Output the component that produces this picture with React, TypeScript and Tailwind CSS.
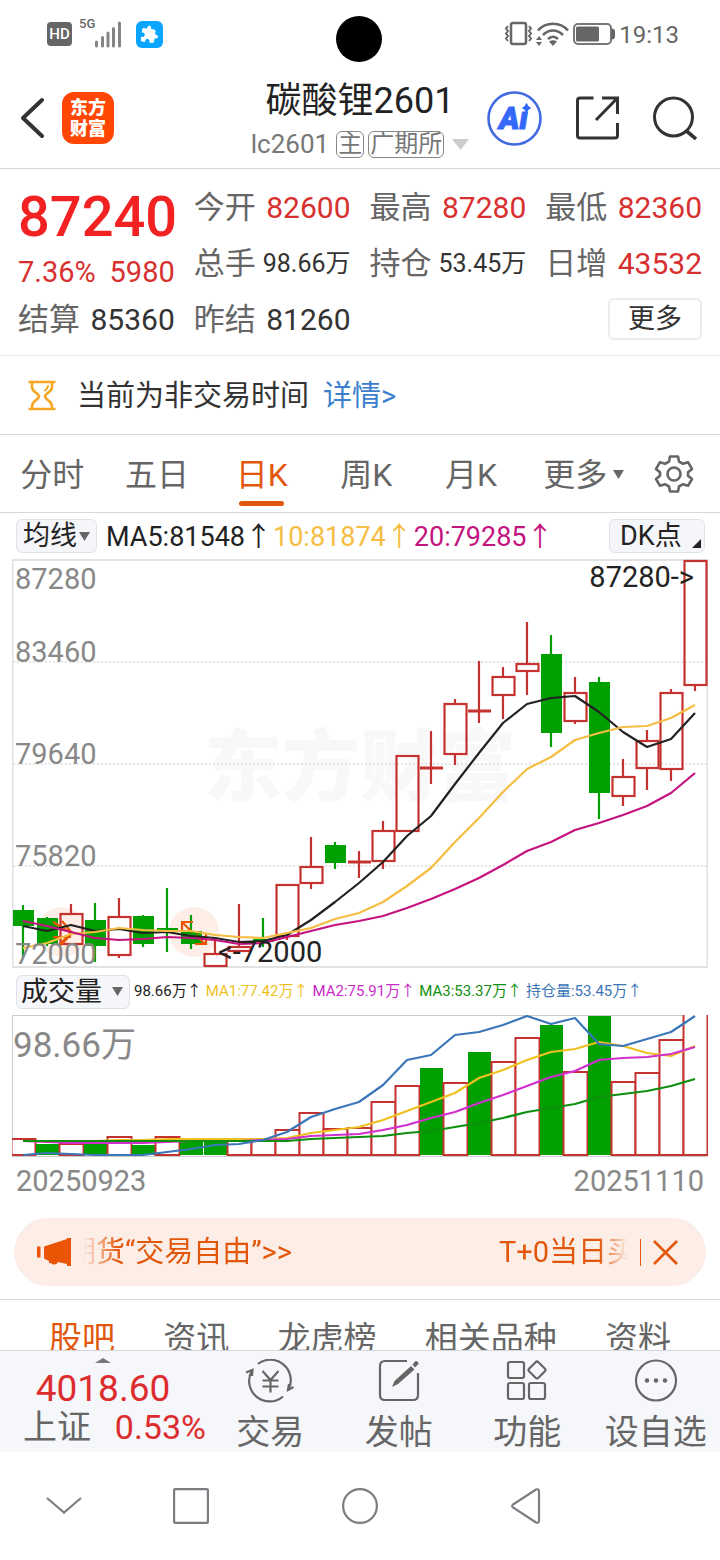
import React from "react";

type Candle = { up: boolean; high: number; top: number; bottom: number; low: number };

const FIRST_X = 23;
const STEP = 24;
const RED = "#c53330";
const GREEN = "#00a000";

const c = (up: boolean, high: number, top: number, bottom: number, low: number): Candle => ({ up, high, top, bottom, low });

const candles: Candle[] = [
  c(false, 905, 910, 926, 957),
  c(false, 917, 918, 944, 946),
  c(true, 904, 914, 944, 944),
  c(false, 903, 920, 946, 962),
  c(true, 898, 917, 955, 958),
  c(false, 915, 916, 944, 947),
  c(false, 888, 928, 930, 952),
  c(false, 915, 931, 944, 949),
  c(true, 938, 954, 966, 967),
  c(true, 904, 947, 951, 952),
  c(false, 918, 939, 942, 947),
  c(true, 884, 885, 936, 940),
  c(true, 837, 867, 883, 889),
  c(false, 842, 845, 863, 869),
  c(true, 851, 862, 862, 878),
  c(true, 821, 831, 861, 869),
  c(true, 755, 756, 831, 831),
  c(true, 731, 768, 768, 784),
  c(true, 699, 704, 754, 765),
  c(true, 661, 711, 711, 723),
  c(true, 667, 677, 695, 719),
  c(true, 622, 664, 671, 695),
  c(false, 635, 654, 733, 747),
  c(true, 677, 693, 721, 724),
  c(false, 677, 682, 793, 819),
  c(true, 759, 777, 796, 806),
  c(true, 730, 741, 768, 790),
  c(true, 689, 693, 769, 781),
  c(true, 560, 561, 685, 691),
];

const ma5 = [926, 931, 925, 931, 929, 933, 932, 936, 938, 942, 941, 935, 920, 902, 883, 862, 836, 816, 784, 753, 723, 704, 698, 696, 712, 732, 747, 739, 713];
const ma10 = [948, 943, 934, 932, 928, 930, 931, 931, 935, 937, 938, 933, 928, 919, 913, 902, 886, 868, 842, 818, 792, 769, 757, 740, 733, 727, 726, 718, 705];
const ma20 = [921, 926, 932, 938, 940, 939, 937, 938, 940, 944, 943, 937, 931, 925, 921, 916, 908, 899, 889, 878, 865, 851, 842, 830, 823, 815, 806, 793, 773];

const bars: [boolean, number][] = [
  [true, 1139], [false, 1144], [true, 1144], [false, 1143], [true, 1137], [false, 1145], [true, 1137], [false, 1141],
  [false, 1141], [true, 1139], [true, 1141], [true, 1130], [true, 1113], [true, 1129], [true, 1128], [true, 1102],
  [true, 1086], [false, 1068], [true, 1083], [false, 1052], [true, 1062], [true, 1038], [false, 1025], [true, 1072],
  [false, 1016], [true, 1082], [true, 1073], [true, 1040], [true, 1008],
];
const vol1 = [1141, 1141, 1141, 1141, 1140, 1140, 1139, 1139, 1139, 1139, 1139, 1138, 1133, 1130, 1127, 1120, 1111, 1102, 1093, 1078, 1070, 1060, 1052, 1049, 1042, 1046, 1053, 1056, 1046];
const vol2 = [1141, 1142, 1143, 1143, 1143, 1143, 1142, 1141, 1141, 1141, 1140, 1139, 1136, 1135, 1134, 1130, 1125, 1118, 1112, 1103, 1095, 1086, 1077, 1071, 1060, 1058, 1057, 1054, 1047];
const vol3 = [1141, 1141, 1141, 1141, 1141, 1141, 1141, 1141, 1141, 1141, 1141, 1141, 1139, 1138, 1137, 1136, 1133, 1131, 1127, 1123, 1118, 1112, 1108, 1104, 1097, 1094, 1091, 1086, 1079];
const interest = [1155, 1153, 1154, 1155, 1155, 1155, 1152, 1149, 1145, 1144, 1140, 1132, 1117, 1109, 1102, 1085, 1060, 1055, 1035, 1032, 1025, 1016, 1024, 1018, 1044, 1046, 1039, 1032, 1016];

const points = (ys: number[]) => ys.map((y, i) => `${FIRST_X + i * STEP},${y}`).join(" ");

function Line({ ys, color }: { ys: number[]; color: string }) {
  return <polyline points={points(ys)} fill="none" stroke={color} strokeWidth="2.200" strokeLinejoin="round" />;
}

function StatusBar() {
  return (
    <div className="relative flex h-[68px] items-center justify-between pl-[47px] pr-[41px] text-[#666]">
      <div className="flex items-center">
        <span className="flex h-6 w-[25px] items-center justify-center rounded bg-[#666] text-[15px] font-medium text-white">HD</span>
        <span className="mb-5 ml-[7px] text-[13px] leading-4 font-medium">5G</span>
        <svg className="h-7 w-[26px]" viewBox="0 0 26 28" aria-hidden="true">
          <g stroke="#858585" strokeWidth="3" strokeLinecap="round">
            <path d="M1.5 22v4M7.500 17.500v8.500M13 13v13M18.500 8.500v17.500M24.500 3v23" />
          </g>
        </svg>
        <span className="ml-[15px] flex size-[27px] items-center justify-center rounded-md bg-[#0aa5ff]">
          <svg className="size-[19px]" viewBox="0 0 24 24" fill="#fff" aria-hidden="true">
            <g transform="rotate(8 12 12)">
              <path d="M20.500 11H19V7c0-1.100-.9-2-2-2h-4V3.500a2.500 2.500 0 0 0-5 0V5H4c-1.100 0-2 .9-2 2v3.800h1.500a2.700 2.700 0 0 1 0 5.400H2V20c0 1.100.9 2 2 2h3.800v-1.500a2.700 2.700 0 0 1 5.400 0V22H17c1.100 0 2-.9 2-2v-4h1.500a2.500 2.500 0 0 0 0-5z" />
            </g>
          </svg>
        </span>
      </div>
      <div className="absolute top-4 left-1/2 -ml-6 size-[46px] rounded-full bg-black" />
      <div className="flex items-center">
        <svg className="h-[26px] w-[29px]" viewBox="0 0 29 26" fill="none" stroke="#666" strokeWidth="2" aria-hidden="true">
          <rect x="7" y="2" width="15" height="21" rx="2" strokeWidth="2.500" />
          <path d="M4 5l-2 2.500 2 2.500-2 2.500 2 2.500-2 2.500 2 2.500M25 5l2 2.500-2 2.500 2 2.500-2 2.500 2 2.500-2 2.500" />
        </svg>
        <svg className="ml-[2px] h-6 w-[34px]" viewBox="0 0 34 24" fill="none" stroke="#666" strokeWidth="2.600" aria-hidden="true">
          <path d="M3 8.500C11-.5 25-.5 33 8.500M8 13c6-6 14-6 20 0M13 17c3-3 7-3 10 0" />
          <path d="M14 19.500q4-2.500 8 0L18 24z" fill="#666" stroke="none" />
          <path d="M1 18l3-4 3 4zM1 20l3 4 3-4z" fill="#666" stroke="none" />
        </svg>
        <svg className="ml-1 h-[22px] w-[42px]" viewBox="0 0 42 22" fill="none" aria-hidden="true">
          <rect x="1" y="1" width="37" height="20" rx="4" stroke="#777" strokeWidth="2" />
          <rect x="3" y="3.500" width="23" height="15" rx="1.500" fill="#666" />
          <path d="M38.500 5.500q3.500 0 3.500 3v5q0 3-3.500 3z" fill="#666" />
        </svg>
        <span className="ml-[4px] pt-[2px] text-[24px] leading-7">19:13</span>
      </div>
    </div>
  );
}

function Header() {
  return (
    <header className="grid h-[101px] grid-cols-[1fr_auto_1fr] items-center border-b border-[#d8d8d8] pr-[23px] pl-[19px]">
      <div className="flex items-center gap-[17px]">
        <button type="button" aria-label="返回">
          <svg className="h-11 w-[26px]" viewBox="0 0 26 44" fill="none" stroke="#333" strokeWidth="4" strokeLinecap="round" strokeLinejoin="round">
            <path d="M23 4L4 22l19 18" />
          </svg>
        </button>
        <span className="flex size-[52px] flex-col items-center justify-center rounded-xl bg-[#ff4602] text-[18px] leading-[21px] font-black text-white">
          <span>东方</span>
          <span>财富</span>
        </span>
      </div>
      <div className="flex flex-col items-center pt-1 pl-1">
        <h1 className="text-[36px] leading-[48px] text-[#222]">碳酸锂2601</h1>
        <button type="button" className="flex items-center text-[26px] leading-[38px] text-[#777]">
          <span className="mr-[7px]">lc2601</span>
          <span className="mr-1 rounded-md border border-[#888] px-px text-[24px] leading-[25px]">主</span>
          <span className="rounded-md border border-[#888] px-px text-[24px] leading-[25px]">广期所</span>
          <svg className="ml-2 h-[11px] w-[17px]" viewBox="0 0 17 11" aria-hidden="true"><path d="M0 0h17L8.500 11z" fill="#ccc" /></svg>
        </button>
      </div>
      <div className="flex items-center justify-end gap-[34px]">
        <button type="button" aria-label="Ai">
          <svg className="size-[55px]" viewBox="0 0 55 55">
            <circle cx="27.500" cy="27.500" r="26" fill="#fff" stroke="#4169e1" strokeWidth="2.600" />
            <text x="12" y="38" fill="#3468fb" stroke="#3468fb" strokeWidth="1" fontSize="31" fontWeight="900" fontStyle="italic">Ai</text>
            <rect x="33" y="11" width="13" height="9" fill="#fff" />
            <path d="M39.500 12.500q1 3.500 4 4.500-3 1-4 4.500-1-3.500-4-4.500 3-1 4-4.500z" fill="#3468fb" stroke="#3468fb" strokeWidth="1" />
          </svg>
        </button>
        <button type="button" aria-label="分享">
          <svg className="h-[44px] w-[43px]" viewBox="0 0 43 44" fill="none" stroke="#333" strokeWidth="3">
            <path d="M17.500 2H4Q1.500 2 1.500 4.500v35Q1.500 42 4 42h35q2.500 0 2.500-2.500V27M26 2h15.500v16M41 2.500L20 24" />
          </svg>
        </button>
        <button type="button" aria-label="搜索">
          <svg className="size-[44px]" viewBox="0 0 44 44" fill="none" stroke="#333" strokeWidth="3">
            <circle cx="20.500" cy="21" r="19" />
            <path d="M33.500 35l9.500 8" strokeWidth="3.600" />
          </svg>
        </button>
      </div>
    </header>
  );
}

function Stat({ label, value, tone }: { label: string; value: string; tone: "red" | "dark" | "small" }) {
  const cls =
    tone === "red" ? "text-[30px] text-[#d8302f]" : tone === "small" ? "pt-px text-[25px] text-[#333]" : "text-[30px] text-[#333]";
  return (
    <div className="flex h-14 items-center justify-between whitespace-nowrap">
      <dt className="pt-[3px] text-[31px] text-[#666]">{label}</dt>
      <dd className={cls}>{value}</dd>
    </div>
  );
}

function Quote() {
  return (
    <section className="border-b border-[#ebebeb] px-[18px] pt-[10px] pb-2">
      <dl className="grid grid-cols-4 gap-x-[19px]">
        <div className="row-span-2 flex flex-col justify-between pt-[5px] pb-[2px]">
          <dt className="text-[56px] leading-[66px] font-medium text-[#f22222]">87240</dt>
          <dd className="flex justify-between text-[29px] leading-[34px] text-[#d8302f]">
            <span>7.36%</span>
            <span>5980</span>
          </dd>
        </div>
        <Stat label="今开" value="82600" tone="red" />
        <Stat label="最高" value="87280" tone="red" />
        <Stat label="最低" value="82360" tone="red" />
        <Stat label="总手" value="98.66万" tone="small" />
        <Stat label="持仓" value="53.45万" tone="small" />
        <Stat label="日增" value="43532" tone="red" />
        <Stat label="结算" value="85360" tone="dark" />
        <Stat label="昨结" value="81260" tone="dark" />
        <div className="col-span-2 flex items-center justify-end">
          <button type="button" className="h-[42px] w-[94px] rounded-md border-2 border-[#ececec] text-[27px] leading-9 text-[#333]">更多</button>
        </div>
      </dl>
    </section>
  );
}

function Notice() {
  return (
    <section className="flex h-[79px] items-center border-b border-[#d8d8d8] pl-[28px] text-[29px] text-[#333]">
      <svg className="h-[31px] w-7" viewBox="0 0 28 31" fill="none" stroke="#f5a623" strokeWidth="2.600" aria-hidden="true">
        <path d="M.5 2h27M.5 29h27M4 2v5q0 3 3.500 5.500T11 16q0 2-3.500 4.500T4 27v2M24 2v5q0 3-3.500 5.500T17 16q0 2 3.500 4.500T24 27v2" />
        <path d="M20 6q-.5 2.500-3 4.500" strokeWidth="2" strokeLinecap="round" />
      </svg>
      <p className="ml-[21px] pt-[3px]">
        当前为非交易时间
        <a href="#detail" className="ml-[14px] text-[#3b80cd]">详情&gt;</a>
      </p>
    </section>
  );
}

function PeriodTabs() {
  const items = ["分时", "五日", "日K", "周K", "月K"];
  return (
    <nav className="flex h-[78px] border-b border-[#d8d8d8] text-[32px] text-[#666]">
      {items.map((t) => (
        <button
          key={t}
          type="button"
          className={t === "日K" ? "relative flex-1 pt-[2px] text-[#e2570c]" : "flex-1 pt-[2px]"}
        >
          {t}
          {t === "日K" && <span className="absolute bottom-[6px] left-1/2 -ml-[23px] h-[5px] w-[45px] rounded-full bg-[#e2570c]" />}
        </button>
      ))}
      <button type="button" className="flex flex-1 items-center justify-center pt-[2px]">
        <span className="ml-4">更多</span>
        <svg className="ml-[6px] h-[9px] w-[11px]" viewBox="0 0 11 9" aria-hidden="true"><path d="M0 0h11L5.500 9z" fill="#666" /></svg>
      </button>
      <button type="button" aria-label="设置" className="flex w-[92px] items-center justify-center">
        <svg className="size-10" viewBox="0 0 40 40" fill="none" stroke="#666" strokeWidth="2.600" strokeLinejoin="round">
          <path d="M16 2.500h8l1 5 4 2.300 5-1.600 4 6.800-4 3.300v3.400l4 3.300-4 6.800-5-1.600-4 2.300-1 5h-8l-1-5-4-2.300-5 1.600-4-6.800 4-3.300v-3.400l-4-3.300 4-6.800 5 1.600 4-2.300z" />
          <circle cx="20" cy="20" r="6.500" />
        </svg>
      </button>
    </nav>
  );
}

function PriceChart() {
  return (
    <svg className="block h-auto w-full" viewBox="12 559 696 409" role="img" aria-label="日K线图">
      <rect x="12.500" y="560" width="695" height="407" fill="#fff" stroke="#e2e2e2" strokeWidth="2" />
      <text x="204" y="795" fontSize="78" fontWeight="900" fill="#f8f8f8">东方财富</text>
      <circle cx="62" cy="932" r="25" fill="#fdeee7" />
      <circle cx="194" cy="932" r="25" fill="#fdeee7" />
      {[662, 764, 866].map((y) => (
        <path key={y} d={`M13 ${y}H707`} stroke="#dcdcdc" strokeWidth="1.500" strokeDasharray="2 2" />
      ))}
      {candles.map((k, i) => {
        const x = FIRST_X + i * STEP;
        const color = k.up ? RED : GREEN;
        return (
          <g key={i} stroke={color} strokeWidth="2.200">
            <path d={`M${x} ${k.high}V${k.top}M${x} ${k.bottom}V${k.low}`} />
            {k.top === k.bottom ? (
              <path d={`M${x - 11} ${k.top}h23`} strokeWidth="3" />
            ) : k.up ? (
              <rect x={x - 10.5} y={k.top} width="22" height={k.bottom - k.top} fill="none" />
            ) : (
              <rect x={x - 10} y={k.top} width="21" height={k.bottom - k.top} fill={color} stroke="none" />
            )}
          </g>
        );
      })}
      <g fill="none" stroke="#ea5504" strokeWidth="2.200">
        <path d="M53 922l18 11-11 11M62 921l10 12-11 12M53 937h18" />
        <path d="M182 931v-9h11M183 923l9 9M196 935l9 9M206 934v10h-11" />
      </g>
      <Line ys={ma5} color="#222" />
      <Line ys={ma10} color="#f5bd42" />
      <Line ys={ma20} color="#c4137f" />
      <g fontSize="29" fill="#888">
        <text x="15" y="589">87280</text>
        <text x="15" y="662">83460</text>
        <text x="15" y="764">79640</text>
        <text x="15" y="866">75820</text>
        <text x="15" y="964">72000</text>
      </g>
      <g fontSize="29" fill="#222">
        <text x="694" y="587" textAnchor="end">87280-&gt;</text>
        <text x="218" y="962">&lt;-72000</text>
      </g>
    </svg>
  );
}

function VolumeChart() {
  return (
    <svg className="block h-auto w-full" viewBox="12 1015 696 142" role="img" aria-label="成交量图">
      <rect x="12.500" y="1015.500" width="695" height="141" fill="#fff" stroke="#ccc" />
      {bars.map(([up, top], i) => {
        const x = FIRST_X + i * STEP;
        return up ? (
          <rect key={i} x={x - 11.500} y={top} width="24" height={1155 - top} fill="#fff" stroke={RED} strokeWidth="2" />
        ) : (
          <rect key={i} x={x - 11} y={top} width="23" height={1155 - top} fill={GREEN} />
        );
      })}
      <Line ys={vol1} color="#efc120" />
      <Line ys={vol2} color="#d22fd0" />
      <Line ys={vol3} color="#0f8f0f" />
      <Line ys={interest} color="#3b76b8" />
      <text x="13" y="1057" fontSize="35" fill="#888">98.66万</text>
    </svg>
  );
}

const volumeLegend = [
  ["98.66万↑", "text-[#222]"],
  ["MA1:77.42万↑", "text-[#eebf1e]"],
  ["MA2:75.91万↑", "text-[#cb2bc9]"],
  ["MA3:53.37万↑", "text-[#0f8f0f]"],
  ["持仓量:53.45万↑", "text-[#3b76b8]"],
];

function Charts() {
  return (
    <section>
      <div className="flex h-[46px] items-center justify-between pr-[15px] pl-4 text-[27px]">
        <div className="flex items-center whitespace-nowrap">
          <span className="relative mr-[9px] flex items-center">
            <select aria-label="主图指标" className="h-[34px] w-[81px] appearance-none rounded-md border border-[#dfe1e6] bg-[#f5f6f9] pl-[6px] text-[27px] leading-8 text-[#222]">
              <option>均线</option>
            </select>
            <svg className="pointer-events-none absolute right-[7px] h-[9px] w-[11px]" viewBox="0 0 11 9" aria-hidden="true"><path d="M0 0h11L5.500 9z" fill="#666" /></svg>
          </span>
          <p className="flex gap-px pt-[3px]">
            <span className="text-[#222]">MA5:81548↑</span>
            <span className="text-[#f5bd42]">10:81874↑</span>
            <span className="text-[#c4137f]">20:79285↑</span>
          </p>
        </div>
        <button type="button" className="flex h-[34px] w-24 items-end justify-between rounded-md border border-[#dfe1e6] bg-[#f5f6f9] pr-[3px] pl-[10px] leading-8 text-[#222]">
          DK点
          <svg className="mb-1 size-[9px]" viewBox="0 0 9 9" aria-hidden="true"><path d="M9 0v9H0z" fill="#222" /></svg>
        </button>
      </div>
      <div className="px-3">
        <PriceChart />
      </div>
      <div className="flex h-[47px] items-center pl-4">
        <span className="relative flex items-center">
          <select aria-label="副图指标" className="h-[34px] w-[114px] appearance-none rounded-md border border-[#dfe1e6] bg-[#f5f6f9] pl-1 text-[27px] leading-8 text-[#222]">
            <option>成交量</option>
          </select>
          <svg className="pointer-events-none absolute right-[7px] h-[9px] w-[11px]" viewBox="0 0 11 9" aria-hidden="true"><path d="M0 0h11L5.500 9z" fill="#666" /></svg>
        </span>
        <div className="ml-1 flex gap-1 text-[15px] whitespace-nowrap">
          {volumeLegend.map(([text, color]) => (
            <span key={text} className={color}>{text}</span>
          ))}
        </div>
      </div>
      <div className="px-3">
        <VolumeChart />
      </div>
      <div className="flex h-[49px] items-center justify-between px-4 text-[29px] text-[#888]">
        <span>20250923</span>
        <span>20251110</span>
      </div>
    </section>
  );
}

function Banner() {
  return (
    <div className="mx-[14px] mt-[12px] mb-[13px] flex h-[68px] items-center rounded-full bg-[#fceee6] pr-[28px] pl-[22px] text-[#e2570c]">
      <svg className="h-[30px] w-9 shrink-0" viewBox="0 0 36 30" fill="#e95504" aria-hidden="true">
        <path d="M1 9.500h3.500v11H1zM8 9.500L31 2V1h4v28h-4v-2l-9-2q-1 2.500-4 2.500h-1l-1-1-3-.5v-2l-5-2.500z" />
      </svg>
      <a
        href="#futures"
        className="ml-[11px] flex min-w-0 flex-1 justify-between overflow-hidden text-[29px] leading-10 whitespace-nowrap [mask-image:linear-gradient(to_right,transparent,black_36px,black_calc(100%-30px),transparent)]"
      >
        <span className="-ml-4">期货“交易自由”&gt;&gt;</span>
        <span className="-mr-2">T+0当日买</span>
      </a>
      <span className="ml-3 h-[27px] w-px bg-[#e2570c]" />
      <button type="button" aria-label="关闭" className="ml-3">
        <svg className="size-[25px]" viewBox="0 0 25 25" stroke="#e2570c" strokeWidth="2.600"><path d="M1 1l23 23M24 1L1 24" /></svg>
      </button>
    </div>
  );
}

function ContentTabs() {
  const items = ["股吧", "资讯", "龙虎榜", "相关品种", "资料"];
  return (
    <nav className="flex h-[51px] items-start justify-between overflow-hidden border-t border-[#d8d8d8] px-[49px] pt-[15px] text-[33px] leading-[48px] whitespace-nowrap text-[#666]">
      {items.map((t) => (
        <button key={t} type="button" className={t === "股吧" ? "text-[#e2570c]" : ""}>{t}</button>
      ))}
    </nav>
  );
}

function NavItem({ label, children }: { label: string; children: React.ReactNode }) {
  return (
    <button type="button" className="flex flex-1 flex-col items-center pt-2 text-[34px] leading-10 whitespace-nowrap text-[#666]">
      <svg className="h-11 w-[50px]" viewBox="0 0 50 44" fill="none" stroke="#666" strokeWidth="2.200">{children}</svg>
      <span className="mt-[9px]">{label}</span>
    </button>
  );
}

function BottomNav() {
  return (
    <nav className="flex h-[102px] border-t border-[#d5d7da] bg-[#f6f7fa]">
      <button type="button" className="flex w-[206px] flex-col items-center pt-[7px]">
        <svg className="h-[5px] w-4" viewBox="0 0 16 5" aria-hidden="true"><path d="M0 5l8-5 8 5z" fill="#777" /></svg>
        <span className="mt-[6px] text-[37px] leading-10 text-[#dd2c2e]">4018.60</span>
        <span className="flex w-full justify-between pl-[23px] text-[34px] leading-9">
          <span className="text-[#666]">上证</span>
          <span className="text-[#dd2c2e]">0.53%</span>
        </span>
      </button>
      <NavItem label="交易">
        <path d="M13 4.800A20.500 20.500 0 0 1 43.800 30M38 37.500A20.500 20.500 0 0 1 7 11.500" />
        <path d="M48.500 28l-5.500 3 1-6M1 13.500l6.500-2.500-.5 6" />
        <path d="M17.500 12l8 9 8-9M25.500 21v12.500M17.500 21.500h16M17.500 27.500h16" />
      </NavItem>
      <NavItem label="发帖">
        <path d="M33 2H11Q6 2 6 7v29q0 5 5 5h28q5 0 5-5V14" />
        <path d="M18 28l2.500-6L37 7l3.500 3.500L24 25z" fill="#666" stroke="none" />
        <path d="M38.500 5.500l3-3.500q3 0 3 3l-3.500 3.500z" fill="#666" stroke="none" />
      </NavItem>
      <NavItem label="功能">
        <rect x="6" y="3" width="16" height="16" rx="2" />
        <rect x="6" y="24" width="16" height="16" rx="2" />
        <rect x="27" y="24" width="16" height="16" rx="2" />
        <rect x="28.500" y="4.500" width="13" height="13" rx="2" transform="rotate(45 35 11)" />
      </NavItem>
      <NavItem label="设自选">
        <circle cx="25" cy="21.500" r="20" />
        <g fill="#666" stroke="none">
          <circle cx="16" cy="21.500" r="2.200" />
          <circle cx="25" cy="21.500" r="2.200" />
          <circle cx="34" cy="21.500" r="2.200" />
        </g>
      </NavItem>
    </nav>
  );
}

function SystemNav() {
  const cls = "flex items-center justify-center";
  return (
    <div className="grid h-[108px] grid-cols-[128fr_126fr_212fr_120fr_134fr]">
      <button type="button" aria-label="收起" className={cls}>
        <svg className="h-5 w-9" viewBox="0 0 36 20" fill="none" stroke="#7b7d82" strokeWidth="2.200"><path d="M1 2l17 14.500L35 2" /></svg>
      </button>
      <button type="button" aria-label="多任务" className={cls}>
        <svg className="size-9" viewBox="0 0 36 36" fill="none" stroke="#7b7d82" strokeWidth="2.200"><rect x="1.100" y="1.100" width="33.800" height="33.800" rx="1" /></svg>
      </button>
      <button type="button" aria-label="主页" className={cls}>
        <svg className="size-9" viewBox="0 0 36 36" fill="none" stroke="#7b7d82" strokeWidth="2.200"><circle cx="18" cy="18" r="16.900" /></svg>
      </button>
      <button type="button" aria-label="后退" className={cls}>
        <svg className="h-9 w-[30px]" viewBox="0 0 30 36" fill="none" stroke="#7b7d82" strokeWidth="2.200"><path d="M2 16.500L25 1.500q3-1 3 2v29q0 3-3 2L2 19.500q-1.500-1.500 0-3z" /></svg>
      </button>
    </div>
  );
}

export default function App() {
  return (
    <main className="w-full overflow-hidden bg-white font-[Roboto,'Noto_Sans_CJK_SC',sans-serif]">
      <StatusBar />
      <Header />
      <Quote />
      <Notice />
      <PeriodTabs />
      <Charts />
      <Banner />
      <ContentTabs />
      <BottomNav />
      <SystemNav />
    </main>
  );
}
